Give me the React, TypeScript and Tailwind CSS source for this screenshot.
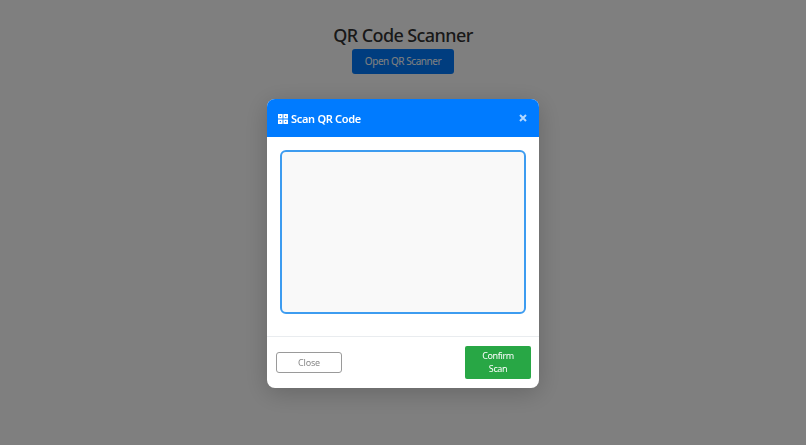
export default function App() {
  return (
    <div className="relative h-[445px] w-[806px] overflow-hidden bg-white font-['Noto_Sans',sans-serif]">
      <div className="flex flex-col items-center pt-[24px]">
        <h1 className="text-[18px] leading-[22px] font-medium tracking-[-0.6px] text-[#333]">QR Code Scanner</h1>
        <button type="button" className="mt-[3px] h-[25px] w-[102px] rounded-[3px] bg-[#007bff] text-[10px] tracking-[-0.45px] text-white">
          Open QR Scanner
        </button>
      </div>

      <div className="fixed inset-0 flex items-start justify-center bg-black/50 pt-[99px]">
        <div className="flex w-[272px] flex-col overflow-hidden rounded-[8px] bg-white shadow-[0_5px_25px_rgba(0,0,0,0.2)]">
          <div className="flex h-[38px] items-center justify-between bg-[#007bff] pr-[12px] pl-[11px] text-white">
            <div className="flex items-center gap-[3px]">
              <svg width="10" height="10" viewBox="0 0 10 10" fill="white" className="mt-[1px] h-[10px] w-[10px]">
                <path fillRule="evenodd" d="M0 0h4.6v4.6H0zM1.7 1.7v1.2h1.2V1.7z" />
                <path fillRule="evenodd" d="M5.4 0H10v4.6H5.4zM7.1 1.7v1.2h1.2V1.7z" />
                <path fillRule="evenodd" d="M0 5.4h4.6V10H0zM1.7 7.1v1.2h1.2V7.1z" />
                <path fillRule="evenodd" d="M5.4 5.4H10V10H5.4zM7.1 7.1v1.2h1.2V7.1z" />
              </svg>
              <span className="pt-[2px] text-[11px] font-semibold tracking-[-0.3px]">Scan QR Code</span>
            </div>
            <svg width="8" height="8" viewBox="0 0 8 8" stroke="white" strokeWidth="2" className="opacity-70">
              <path d="M1 1l6 6M7 1L1 7" />
            </svg>
          </div>

          <div className="px-[13px] pt-[13px] pb-[22px]">
            <div className="h-[164px] rounded-[6px] border-2 border-[#3d9cf0] bg-[#f9f9f9]" />
          </div>

          <div className="flex items-center justify-between border-t border-[#e9ecef] pt-[9px] pr-[8px] pb-[9px] pl-[9px]">
            <button type="button" className="h-[21px] w-[66px] rounded-[3px] border border-[#9a9a9a] bg-white text-[9px] tracking-[-0.2px] text-[#888]">
              Close
            </button>
            <button type="button" className="h-[33px] w-[66px] rounded-[2px] bg-[#28a745] pb-[2px] text-[9px] leading-[13px] tracking-[-0.4px] text-white">
              Confirm
              <br />
              Scan
            </button>
          </div>
        </div>
      </div>
    </div>
  );
}
